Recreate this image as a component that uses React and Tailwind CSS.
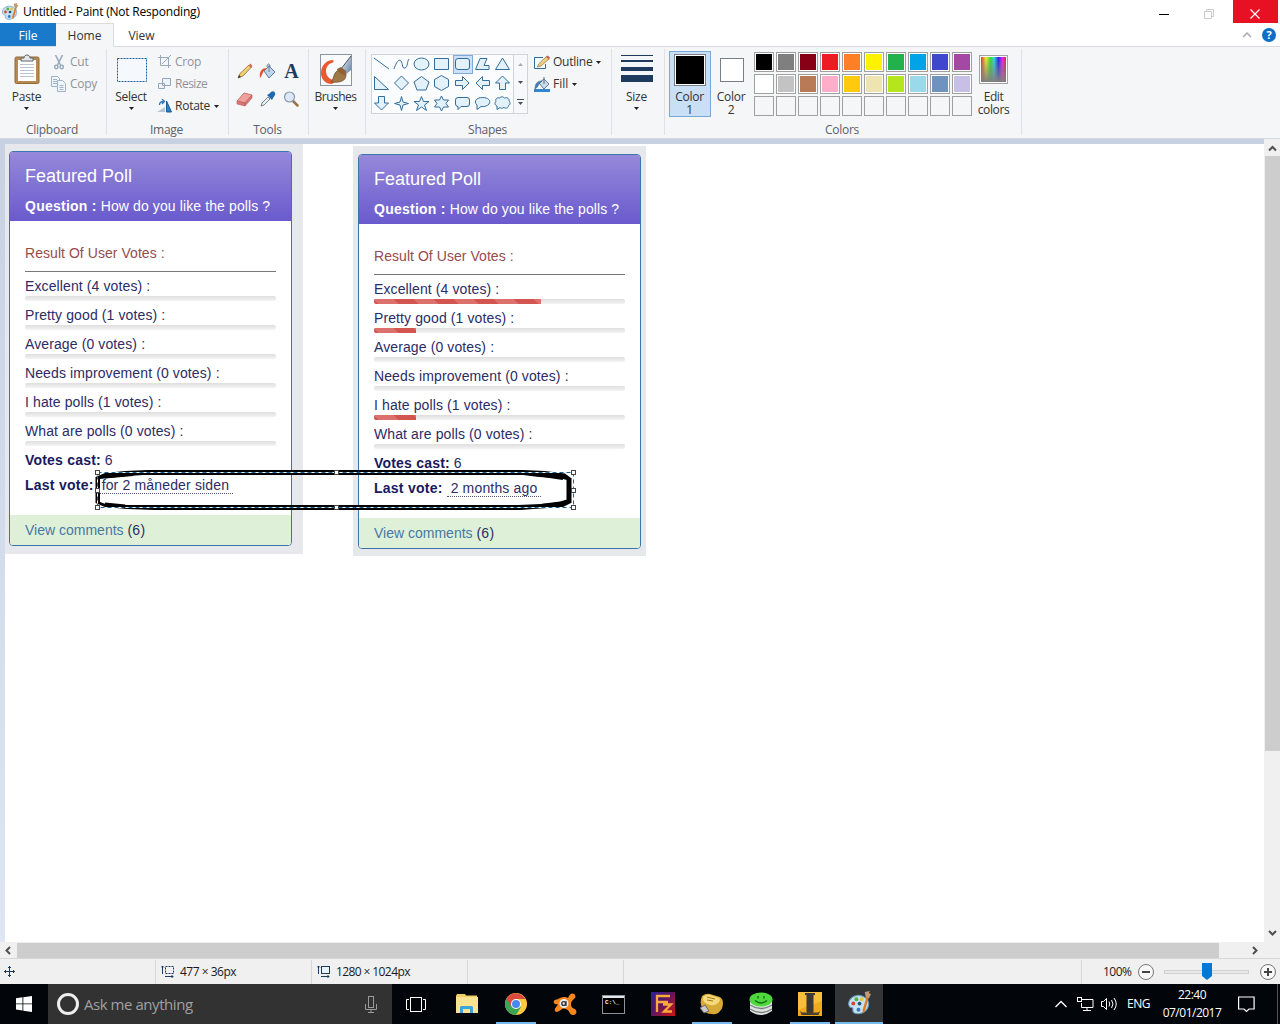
import React from 'react';

const ink = '#1f3a5f';

function Arrow({ className = '' }) {
  return (
    <svg className={className} width="5" height="3" viewBox="0 0 5 3">
      <path d="M0 0h5L2.500 3z" fill="#222" />
    </svg>
  );
}

function PaintIcon({ size = 18 }) {
  return (
    <svg width={size} height={size} viewBox="0 0 24 24">
      <path d="M2 10C4 5 10 3 15 5c5 2 7 6 5 11-2 5-9 7-13 5-3-2 0-4-2-5-3 0-4-3-3-6z" fill="#c4e2f2" stroke="#6c9dbd" />
      <circle cx="6" cy="12" r="1.900" fill="#d94436" />
      <circle cx="9" cy="8" r="1.900" fill="#58ad45" />
      <circle cx="14" cy="8" r="1.900" fill="#e9c43c" />
      <circle cx="12" cy="12" r="1.800" fill="#28507a" />
      <circle cx="11" cy="18" r="1.900" fill="#3b78c2" />
      <path d="M19 5l2 1-4 14-2 1v-3z" fill="#df7a25" />
      <path d="M17 1l5-1-1 2 2 1-2 4-3-1z" fill="#c29a70" />
    </svg>
  );
}

function Group({ label, width, children }) {
  return (
    <div className={`${width} flex h-[91px] shrink-0 flex-col`}>
      <div className="flex h-[74px]">{children}</div>
      <div className="h-[17px] pr-[2px] text-center leading-[17px] text-[#5c6066]">{label}</div>
    </div>
  );
}

function Divider() {
  return <div className="mt-[2px] h-[86px] w-px shrink-0 bg-[#dfe1e4]" />;
}

function BigButton({ icon, label, width }) {
  return (
    <div className={`${width} flex shrink-0 flex-col items-center pt-[7px]`}>
      <div className="flex h-[33px] items-start justify-center">{icon}</div>
      <div className="h-[19px] leading-[20px]">{label}</div>
      <Arrow className="mt-[1px]" />
    </div>
  );
}

function Row({ icon, label, muted, arrow }) {
  return (
    <div className={`flex h-[22px] items-center ${muted ? 'text-[#8f9399]' : 'text-[#333]'}`}>
      <div className="flex w-[20px] shrink-0 items-center">{icon}</div>
      <span>{label}</span>
      {arrow && <Arrow className="ml-[4px]" />}
    </div>
  );
}

const clipboardIcon = (
  <svg width="26" height="30" viewBox="0 0 26 30">
    <rect x="1" y="3" width="24" height="26.500" rx="1.500" fill="#b48a51" stroke="#8f6a38" />
    <rect x="4" y="6" width="18" height="21" fill="#fff" />
    <path d="M6 10.500h14M6 13.500h14M6 16.500h14M6 19.500h14M6 22.500h14" stroke="#b8c4d2" />
    <path d="M7 7V4h3c0-4 6-4 6 0h3v3z" fill="#e3e5e8" stroke="#5f6670" />
  </svg>
);
const cutIcon = (
  <svg className="ml-[4px]" width="10" height="15" viewBox="0 0 10 15">
    <path d="M1.500 0l5 10M8.500 0l-5 10" stroke="#9aabc0" strokeWidth="1.600" />
    <circle cx="2.300" cy="12" r="1.700" fill="none" stroke="#9aabc0" strokeWidth="1.500" />
    <circle cx="7.700" cy="12" r="1.700" fill="none" stroke="#9aabc0" strokeWidth="1.500" />
  </svg>
);
const copyIcon = (
  <svg className="ml-px" width="15" height="16" viewBox="0 0 15 16" fill="#f2f6fa" stroke="#9db1c8">
    <path d="M.5.5h6l2 2v8h-8z" />
    <path d="M2 3.500h4M2 5.500h4M2 7.500h4" />
    <path d="M6.500 4.500h5l3 3v8h-8z" />
    <path d="M8.500 9.500h4M8.500 11.500h4M8.500 13.500h4" />
  </svg>
);
const selectIcon = (
  <svg className="mt-[4px] ml-[1px]" width="30" height="24" viewBox="0 0 30 24">
    <rect x=".5" y=".5" width="29" height="23" fill="#f5f9fd" stroke="#1d5f9e" strokeDasharray="2 1" />
  </svg>
);
const cropIcon = (
  <svg width="14" height="14" viewBox="0 0 14 14" fill="none" stroke="#9aaabd">
    <path d="M2.500 0v10.500H13M0 2.500h10.500V13M13 0L4 9" />
  </svg>
);
const resizeIcon = (
  <svg width="13" height="12" viewBox="0 0 13 12" fill="#eef3f8" stroke="#92a5bb">
    <path d="M4.500.5h8v7h-8zM.5 5.500h6v5h-6z" />
  </svg>
);
const rotateIcon = (
  <svg width="16" height="14" viewBox="0 0 16 14">
    <path d="M9.500 2v11h5z" fill="#2d7fc0" stroke="#1c5b91" />
    <path d="M0 13l8-5v5z" fill="#b7c3cf" />
    <path d="M2.500 6c0-2 1-3.500 4-3.500M5 0l2.500 2.500L5 5" fill="none" stroke="#2a73b5" strokeWidth="1.300" />
  </svg>
);

const tools = [
  <svg key="pencil" width="16" height="16" viewBox="0 0 16 16">
    <path d="M1 15l2-4.500L12 2l2.500 2L6 13z" fill="#f2cf73" stroke="#8c7038" strokeWidth=".8" />
    <path d="M11.500 2.500l2.500 2.500 1.500-2L13.500.5z" fill="#d66a62" />
    <path d="M1 15l1-3 2 2z" fill="#333" />
  </svg>,
  <svg key="fill" width="17" height="17" viewBox="0 0 17 17">
    <path d="M5 8l5-5 6 6-6 6z" fill="#bdd5ea" stroke="#5d7fa3" />
    <path d="M10 9V2M8 4c0-4 3-4 3 0" stroke="#6b7f94" fill="none" />
    <path d="M1 15C0 8 3 5 8 5L5 8c-1.500 1-2 5-4 7z" fill="#e0532c" />
  </svg>,
  <div key="text" className="text-center font-['Liberation_Serif',serif] text-[20px] leading-[17px] font-bold text-[#1f3a5f]">A</div>,
  <svg key="eraser" width="17" height="15" viewBox="0 0 17 15">
    <path d="M1 9l7-8 8 2-7 8z" fill="#f1a09b" stroke="#b8605f" strokeWidth=".8" />
    <path d="M1 9v3l8 2v-3zM9 11v3l7-8V3z" fill="#da7672" stroke="#b8605f" strokeWidth=".6" />
  </svg>,
  <svg key="picker" width="16" height="16" viewBox="0 0 16 16">
    <path d="M1 15l1-3 6-6 2 2-6 6z" fill="#e8f0f7" stroke="#567" strokeWidth=".8" />
    <path d="M7 4l5 5 1-2 2-3c1-3-2-5-4-3L9 3z" fill="#2268ae" />
  </svg>,
  <svg key="zoom" width="16" height="16" viewBox="0 0 16 16">
    <path d="M10 10l4.500 4.500" stroke="#9c7048" strokeWidth="2.500" strokeLinecap="round" />
    <circle cx="6.500" cy="6" r="5" fill="#dbe9f6" stroke="#8a99aa" strokeWidth="1.200" />
  </svg>,
];

const brushIcon = (
  <svg width="32" height="32" viewBox="0 0 32 32">
    <defs>
      <linearGradient id="brushHandle" x1="0" y1="0" x2="1" y2="1"><stop stopColor="#f4f7fa" /><stop offset="1" stopColor="#5d7ba3" /></linearGradient>
    </defs>
    <rect x=".5" y=".5" width="31" height="31" fill="#f8fafb" stroke="#8b95a1" />
    <path d="M31 2v14l-6 5-4-5z" fill="url(#brushHandle)" />
    <path d="M31 2L21 15" stroke="#434d58" />
    <path d="M13 6C6 6 1 12 1 19c0 6 4 11 11 11l6-4c-7 1-12-3-12-9 0-4 3-8 6-8 2-1 2-2 1-3z" fill="#e85a30" />
    <path d="M11 28c3-3 2-8 6-11 4-3 9 0 9 4 0 6-6 8-15 7z" fill="#a07848" stroke="#6d4c27" strokeWidth=".7" />
    <path d="M17 15l4-2 5 4v4c-3 0-8-2-9-6z" fill="#8e6233" />
  </svg>
);

const shapes = [
  'M1 2l15 11',
  'M1 13C3 7 6 2 8 5s1 8 4 7 2-7 4-9',
  'M1 7.500a7.500 6 0 1 0 15 0a7.500 6 0 1-0-15 0z',
  'M1.500 2.500h14v11h-14z',
  'M4 2.500h9q2.500 0 2.500 2.500v6q0 2.500-2.500 2.500H4q-2.500 0-2.500-2.500V5Q1.500 2.500 4 2.500z',
  'M1.500 13.500l4.500-11h7l-3 7h5v4z',
  'M8.500 2l7 11.500h-14z',
  'M1.500 1.500v13h14z',
  'M8.500 1l7 7-7 7-7-7z',
  'M8.500 1.500l7.500 5.500-3 8h-9l-3-8z',
  'M8.500.5l7 4v7l-7 4-7-4v-7z',
  'M1.500 5.500h7v-4l6.500 6.500-6.500 6.500v-4h-7z',
  'M15.500 5.500h-7v-4L2 8l6.500 6.500v-4h7z',
  'M8.500 1l7 7h-4v6.500h-6V8h-4z',
  'M5.500 1.500h6V8h4l-7 7-7-7h4z',
  'M8.500 1.500l1.500 5.500 5.500 1.500-5.500 1.500-1.500 5.500-1.500-5.500-5.500-1.500 5.500-1.500z',
  'M8.500 1.500l2 5h5.500l-4.500 3.500 2 5.500-5-3.500-5 3.500 2-5.500L1 6.500h5.500z',
  'M8.500 1l2 4h5l-2.500 3.500 2.500 3.500h-5l-2 4-2-4h-5L4 8.500 1.500 5h5z',
  'M4 2.500h9q2.500 0 2.500 2.500v4q0 2.500-2.500 2.500H7l-3 3v-3q-2.500 0-2.500-2.500V5Q1.500 2.500 4 2.500z',
  'M3 10C-1 6 3 2.500 8.500 2.500s9 3 6.500 6.500c-1.500 2-5 3-8 2.500L3 14.500z',
  'M3 11C0 10 1 7 2 6.500 1 4 3 2 5.500 3c2-2 4-1 5 0 3-1 5 1 4.500 3 2 2 1 4-.5 4.500 0 3-3 3-4.500 2-2 1-3 1-4 0l-3 2z',
];

function ShapeGallery() {
  return (
    <div className="mt-[7px] ml-[5px] flex h-[60px] w-[157px] shrink-0 border border-[#d0d3d8] bg-[#fbfcfe]">
      <div className="grid w-[141px] grid-cols-7 grid-rows-3">
        {shapes.map((d, i) => (
          <div
            key={i}
            className={`flex items-center justify-center ${i === 4 ? 'bg-[#cce1f7] outline outline-[#7cabdb] -outline-offset-1' : ''}`}
          >
            <svg className="-ml-px" width="17" height="17" viewBox="0 0 17 17">
              {i === 2 ? (
                <ellipse cx="8.500" cy="8" rx="7.500" ry="6" fill="#e3f1fa" stroke="#326d9b" />
              ) : (
                <path d={d} fill={i < 2 ? 'none' : '#e3f1fa'} stroke="#326d9b" />
              )}
            </svg>
          </div>
        ))}
      </div>
      <div className="flex w-[14px] flex-col items-center justify-around border-l border-[#d0d3d8] bg-[#f7f8fa] pr-px">
        <svg width="5" height="3"><path d="M0 3h5L2.500 0z" fill="#a9adb3" /></svg>
        <svg width="5" height="3"><path d="M0 0h5L2.500 3z" fill="#444e5c" /></svg>
        <svg width="7" height="6"><path d="M0 .5h7" stroke="#444e5c" /><path d="M1 3h5L3.500 6z" fill="#444e5c" /></svg>
      </div>
    </div>
  );
}

const outlineIcon = (
  <svg width="16" height="15" viewBox="0 0 16 15">
    <path d="M9 2.500H.5v11h11V9" fill="#f4fafe" stroke="#326b99" />
    <path d="M3.500 12l1-3 8-7.500L15 4l-8 7z" fill="#ecd080" stroke="#8c7038" strokeWidth=".7" />
    <path d="M12 2l3 2.500 1-2L13.500.5z" fill="#c75b55" />
  </svg>
);
const fillIcon = (
  <svg width="16" height="16" viewBox="0 0 16 16">
    <path d="M0 13h16v3H0z" fill="#3385cf" />
    <path d="M5 7l5-4 5 5-5 5z" fill="#cbdceb" stroke="#5f7d99" />
    <path d="M10 8V1" stroke="#4d728f" />
    <path d="M1 13C1 7 4 5 8 5L5 8c-1 2-2 4-4 5z" fill="#447fb4" stroke="#4d728f" strokeWidth=".7" />
  </svg>
);

const palette = [
  '#000000', '#7f7f7f', '#880015', '#ed1c24', '#ff7f27', '#fff200', '#22b14c', '#00a2e8', '#3f48cc', '#a349a4',
  '#ffffff', '#c3c3c3', '#b97a57', '#ffaec9', '#ffc90e', '#efe4b0', '#b5e61d', '#99d9ea', '#7092be', '#c8bfe7',
  null, null, null, null, null, null, null, null, null, null,
];

function Ribbon() {
  return (
    <div className="flex h-[92px] border-b border-[#d5d8dc] bg-[#f5f6f7] tracking-[-0.25px] text-[#333]">
      <Group label="Clipboard" width="w-[106px]">
        <BigButton icon={clipboardIcon} label="Paste" width="w-[53px]" />
        <div className="-ml-[3px] pt-[4px]">
          <Row icon={cutIcon} label="Cut" muted />
          <Row icon={copyIcon} label="Copy" muted />
        </div>
      </Group>
      <Divider />
      <Group label="Image" width="w-[121px]">
        <BigButton icon={selectIcon} label="Select" width="w-[48px]" />
        <div className="pt-[4px]">
          <Row icon={<div className="pl-[3px]">{cropIcon}</div>} label="Crop" muted />
          <Row icon={<div className="pl-[3px]">{resizeIcon}</div>} label={<span className="tracking-[-0.5px]">Resize</span>} muted />
          <Row icon={<div className="pl-[2px]">{rotateIcon}</div>} label="Rotate" arrow />
        </div>
      </Group>
      <Divider />
      <Group label="Tools" width="w-[79px]">
        <div className="mt-[10px] ml-[4px] grid h-[56px] w-[70px] grid-cols-3 grid-rows-2 place-items-center">{tools}</div>
      </Group>
      <Divider />
      <Group label="" width="w-[56px]">
        <BigButton icon={brushIcon} label={<span className="tracking-[-0.5px]">Brushes</span>} width="w-[53px]" />
      </Group>
      <Divider />
      <Group label="Shapes" width="w-[245px]">
        <ShapeGallery />
        <div className="ml-[6px] pt-[4px]">
          <Row icon={outlineIcon} label={<span className="-ml-px">Outline</span>} arrow />
          <Row icon={fillIcon} label={<span className="-ml-px tracking-normal">Fill</span>} arrow />
        </div>
      </Group>
      <Divider />
      <Group label="" width="w-[52px]">
        <BigButton
          label="Size"
          width="w-[49px]"
          icon={
            <div className="mt-px flex w-[32px] flex-col">
              <div className="h-px bg-[#1f3a5f]" />
              <div className="mt-[4px] h-[2px] bg-[#1f3a5f]" />
              <div className="mt-[5px] h-[4px] bg-[#1f3a5f]" />
              <div className="mt-[4px] h-[7px] bg-[#1f3a5f]" />
            </div>
          }
        />
      </Group>
      <Divider />
      <Group label="Colors" width="w-[356px]">
        <div className="mt-[4px] ml-[4px] flex h-[66px] w-[42px] shrink-0 flex-col items-center border border-[#79a7d8] bg-[#c9dff5] pt-[2px] text-center leading-[13px]">
          <div className="mb-[4px] h-[32px] w-[32px] border border-[#7a7f85] bg-white p-px">
            <div className="h-full bg-black" />
          </div>
          <span className="-ml-px">Color<br />1</span>
        </div>
        <div className="mt-[11px] ml-[1px] flex w-[39px] shrink-0 flex-col items-center text-center leading-[13px]">
          <div className="mb-[8px] h-[24px] w-[24px] border border-[#7a7f85] bg-white" />
          <span className="-ml-px">Color<br />2</span>
        </div>
        <div className="mt-[5px] ml-[3px] grid h-[64px] w-[218px] shrink-0 grid-cols-10 gap-[2px]">
          {palette.map((c, i) => (
            <div key={i} className={`h-[20px] w-[20px] border border-[#a0a0a0] p-px ${c ? 'bg-white' : 'bg-[#f5f6f7]'}`}>
              {c && <div className="h-full" style={{ backgroundColor: c }} />}
            </div>
          ))}
        </div>
        <div className="mt-[8px] ml-[2px] flex w-[39px] shrink-0 flex-col items-center text-center leading-[13px]">
          <div className="mb-[6px] h-[29px] w-[29px] border border-[#a3a3a3] bg-white p-px">
            <div className="h-full bg-[linear-gradient(to_top,#808080,transparent),linear-gradient(to_right,#d33,#ee3_20%,#3d3_38%,#3dd_52%,#22e_70%,#e2e_85%,#e22)]" />
          </div>
          <span className="tracking-[-0.4px]">Edit<br />colors</span>
        </div>
      </Group>
      <Divider />
    </div>
  );
}

const options = [
  ['Excellent', 4],
  ['Pretty good', 1],
  ['Average', 0],
  ['Needs improvement', 0],
  ['I hate polls', 1],
  ['What are polls', 0],
];

function PollCard({ showBars, last }) {
  return (
    <div className="h-[395px] w-[283px] overflow-hidden rounded-[4px] border border-[#3a75ab] bg-white font-['Liberation_Sans',Arial,sans-serif] text-[14px] leading-[20px] text-[#2c2c66]">
      <div className="h-[69px] bg-linear-to-b from-[#9688da] to-[#6a5acd] px-[15px] pt-[14px] text-white">
        <div className="text-[18px] leading-[20px]">Featured Poll</div>
        <div className="mt-[10px] tracking-[0.11px] whitespace-nowrap"><b className="tracking-[0.25px]">Question :</b> How do you like the polls ?</div>
      </div>
      <div className="h-[294px] px-[15px] pt-[22px] tracking-[0.11px]">
        <div className="tracking-[0.05px] text-[#964c4c]">Result Of User Votes :</div>
        <div className="mt-[8px] mb-[4px] h-px bg-[#77777d]" />
        {options.map(([name, votes]) => (
          <div key={name} className="mb-[4px]">
            <div>{name} ({votes} votes) :</div>
            <div className="h-[5px] overflow-hidden rounded-[2px] bg-linear-to-b from-[#dedede] to-[#f4f4f4]">
              {showBars && votes > 0 && (
                <div
                  className="h-full bg-[#d3554f] bg-[linear-gradient(45deg,#dc706c_25%,transparent_25%,transparent_50%,#dc706c_50%,#dc706c_75%,transparent_75%)] bg-size-[40px_40px]"
                  style={{ width: `${(votes / 6) * 100}%` }}
                />
              )}
            </div>
          </div>
        ))}
        <div><b className="tracking-[0.2px] text-[#191960]">Votes cast:</b> 6</div>
        <div className="mt-[5px] flex">
          <b className="tracking-[0.25px] text-[#191960]">Last vote:</b>
          <span className="ml-[4px] h-[19px] border-b border-dotted border-[#555580] px-[4px] leading-[20px] tracking-[0.16px]">{last}</span>
        </div>
      </div>
      <div className="h-[30px] bg-[#dff0d8] px-[15px] leading-[30px]">
        <span className="text-[#4678a5]">View comments</span> <span className="tracking-[0.25px]">(6)</span>
      </div>
    </div>
  );
}

const handles = [[0, 0], [239, 0], [476, 0], [0, 18], [476, 18], [0, 35], [239, 35], [476, 35]];

function Selection() {
  return (
    <svg className="absolute top-[324px] left-[88px]" width="486" height="46" viewBox="0 0 486 46">
      <g fillRule="evenodd">
        <path d="M55 2H430L452 3 472 5.500 478 10V35L470 39 440 41 428 42H62L34 41 12 39 2.500 35V9L12 5 32 3zM50 7L28 8.500 7 11V34L14 36.500 34 37H425L448 36 467 33.500 474 31.500V12L466 10 446 9 430 7z" fill="#000" transform="translate(0 0)" />
      </g>
      <g fill="none">
        <rect x="4.500" y="4.500" width="476" height="35" stroke="#fff" />
        <rect x="4.500" y="4.500" width="476" height="35" stroke="#1c6299" strokeDasharray="4 3" />
        <path d="M12 9L40 6.500M12 36L32 38M450 7.500l20 3M448 37.500l22-2" stroke="#000" strokeWidth="3" />
        <path d="M476 10v25" stroke="#000" strokeWidth="5" />
      </g>
      {handles.map(([x, y]) => (
        <rect key={`${x}-${y}`} x={x + 2.5} y={y + 2.5} width="4" height="4" fill="#fff" stroke="#444" />
      ))}
    </svg>
  );
}

function Chevron({ d, color = '#505050' }) {
  return (
    <svg width="9" height="9" viewBox="0 0 9 9">
      <path d={d} fill="none" stroke={color} strokeWidth="2" />
    </svg>
  );
}

function Workspace() {
  return (
    <div className="flex h-[803px] bg-[#c8d1e2]">
      <div className="w-[5px] shrink-0 bg-linear-to-b from-[#c8d1e2] to-[#dde6f2]" />
      <div className="relative mt-[5px] w-[1259px] overflow-hidden bg-white">
        <div className="absolute top-0 left-0 h-[410px] w-[298px] bg-[#e7e8ec] pt-[7px] pl-[4px]">
          <PollCard last="for 2 måneder siden" />
        </div>
        <div className="absolute top-[2px] left-[348px] h-[410px] w-[293px] bg-[#e7e8ec] pt-[8px] pl-[5px]">
          <PollCard showBars last="2 months ago" />
        </div>
        <Selection />
      </div>
      <div className="flex w-[16px] flex-col items-center bg-[#f0f0f0]">
        <div className="flex h-[17px] items-center pt-px"><Chevron d="M1 6.500L4.500 3 8 6.500" /></div>
        <div className="h-[595px] w-[15px] bg-[#cdcdcd]" />
        <div className="mt-auto flex h-[20px] items-center"><Chevron d="M1 3l3.500 3.500L8 3" /></div>
      </div>
    </div>
  );
}

function StatusBar() {
  return (
    <div className="flex h-[26px] items-center border-t border-[#d7d7d7] bg-[#f0f0f0] text-[#1a1a1a]">
      <div className="flex h-[24px] w-[156px] items-center border-r border-[#d7d7d7] pl-[4px]">
        <svg width="11" height="11" viewBox="0 0 11 11" fill="none" stroke={ink}>
          <path d="M5.500 0v11M0 5.500h11M4 2l1.500-1.500L7 2M4 9l1.500 1.500L7 9M2 4L.5 5.500 2 7M9 4l1.500 1.500L9 7" />
        </svg>
      </div>
      <div className="flex h-[24px] w-[156px] items-center border-r border-[#d7d7d7] pl-[5px]">
        <svg width="14" height="13" viewBox="0 0 14 13" fill="none" stroke={ink}>
          <path d="M1.500 1v8M0 2.500L1.500 1 3 2.500M4 11.500h8M10.500 10l1.500 1.500-1.500 1.500" />
          <rect x="4.500" y="1.500" width="8" height="7" strokeDasharray="2 1" />
        </svg>
        <span className="ml-[5px] tracking-[-0.5px]">477 × 36px</span>
      </div>
      <div className="flex h-[24px] w-[156px] items-center border-r border-[#d7d7d7] pl-[5px]">
        <svg width="14" height="13" viewBox="0 0 14 13" fill="none" stroke={ink}>
          <path d="M1.500 1v8M0 2.500L1.500 1 3 2.500M4 11.500h8M10.500 10l1.500 1.500-1.500 1.500" />
          <rect x="4.500" y="1.500" width="8" height="7" fill="#e8f3fb" />
        </svg>
        <span className="ml-[5px] tracking-[-0.6px]">1280 × 1024px</span>
      </div>
      <div className="h-[24px] w-[156px] border-r border-[#d7d7d7]" />
      <div className="h-[24px] w-[458px] border-r border-[#d7d7d7]" />
      <div className="flex h-[24px] flex-1 items-center">
        <span className="ml-[21px] w-[34px] tracking-[-0.5px]">100%</span>
        <svg width="18" height="18" viewBox="0 0 18 18"><circle cx="9" cy="9" r="7.500" fill="#f7f7f7" stroke="#777" /><path d="M5 9h8" stroke="#444" strokeWidth="2" /></svg>
        <div className="relative ml-[9px] h-[4px] w-[85px] border border-[#d0d0d0] bg-[#e8eaea]">
          <svg className="absolute -top-[8px] left-[37px]" width="10" height="17"><path d="M0 0h10v13l-5 4-5-4z" fill="#0078d7" /></svg>
        </div>
        <svg className="ml-[10px]" width="18" height="18" viewBox="0 0 18 18"><circle cx="9" cy="9" r="7.500" fill="#f7f7f7" stroke="#777" /><path d="M5 9h8M9 5v8" stroke="#444" strokeWidth="2" /></svg>
      </div>
    </div>
  );
}

const apps = [
  { name: 'explorer', icon: (
    <svg width="22" height="20" viewBox="0 0 22 20"><path d="M0 2l1-2h8l1 1.500h11V19H0z" fill="#f0cf63" /><path d="M0 3h22v16H0z" fill="#fbe391" /><path d="M4 19v-6l1-1h11l1 1v6h-3v-4H7v4z" fill="#3da6d9" /></svg>
  ) },
  { name: 'chrome', open: true, icon: (
    <svg width="22" height="22" viewBox="0 0 22 22">
      <circle cx="11" cy="11" r="11" fill="#fcca3f" />
      <path d="M11 11L1.500 5.500A11 11 0 0 0 11 22l5-8z" fill="#3ba457" />
      <path d="M11 11l-5 2-4.500-7.500A11 11 0 0 1 20.500 6H11z" fill="#dc4b3e" />
      <circle cx="11" cy="11" r="5" fill="#fff" /><circle cx="11" cy="11" r="4" fill="#4688f1" />
    </svg>
  ) },
  { name: 'avast', icon: (
    <svg width="24" height="24" viewBox="0 0 24 24">
      <path d="M7 6q5-2 8 0 2-5 5-4.500 3.500 1 2 4.500c-2 2-4 3-4 6s1 4 4 5q3 3 0 5.500c-3 1.500-5 0-6-3q-2-3-6-3-3 2-6 3.500-3 0-2-3.500l3-4q-4 0-4.500-2.500Q1 7 4 7.500z" fill="#f7861c" />
      <circle cx="11" cy="11.500" r="4.500" fill="#e9edf2" /><circle cx="10.700" cy="11.500" r="1.900" fill="none" stroke="#333" strokeWidth="1.400" /><path d="M13 9v5" stroke="#333" strokeWidth="1.200" />
    </svg>
  ) },
  { name: 'terminal', icon: (
    <div className="flex h-[19px] w-[23px] flex-col border border-[#8c9298] bg-black">
      <div className="h-[2px] shrink-0 bg-[#e4e7ea]" />
      <div className="pl-[2px] font-['Liberation_Mono',monospace] text-[6px] leading-[9px] font-bold text-white">C:\_</div>
    </div>
  ) },
  { name: 'filezilla', icon: (
    <svg width="24" height="24" viewBox="0 0 24 24">
      <defs><linearGradient id="fz" x1="0" y1="0" x2="1" y2="1"><stop stopColor="#2a2199" /><stop offset=".45" stopColor="#5d1560" /><stop offset="1" stopColor="#d01414" /></linearGradient></defs>
      <path d="M0 0h24v24H0z" fill="url(#fz)" />
      <path d="M6 20V4h13M6 10h11M12 12.500h8l-7 7h8" stroke="#f9a93a" strokeWidth="2.300" fill="none" />
    </svg>
  ) },
  { name: 'connector', open: true, icon: (
    <svg width="25" height="22" viewBox="0 0 25 22">
      <path d="M3 3q4-3 8-2l10 3q3 2 3 6 0 5-3 8-3 4-8 3-6 0-9-4Q0 10 3 3z" fill="#d7aa35" />
      <path d="M4 4q3-3 7-2l9 3q2 2-1 5-3 3-8 2Q3 10 4 4z" fill="#f5da7b" />
      <path d="M8 4l8 2M8 7l6 1" stroke="#a57a21" strokeWidth="1.200" />
      <path d="M1 15l5-3 4 6-5 2z" fill="#c8cacb" stroke="#666" />
    </svg>
  ) },
  { name: 'database', icon: (
    <svg width="24" height="24" viewBox="0 0 24 24">
      <path d="M1 8v11q11 8 22 0V8z" fill="#dfe4e2" />
      <path d="M1 13q11 7 22 0M1 17q11 7 22 0" fill="none" stroke="#7a827f" strokeWidth="1.300" />
      <ellipse cx="12" cy="7.500" rx="11.500" ry="7" fill="#4fd83d" />
      <path d="M6 8.500q6 5 12 0M9 4v2.500M15 4v2.500" fill="none" stroke="#126613" strokeWidth="1.300" />
    </svg>
  ) },
  { name: 'tower', open: true, icon: (
    <svg width="24" height="24" viewBox="0 0 24 24"><path d="M0 0h24v24H0z" fill="#f3a91c" /><path d="M0 18L24 9V0H0z" fill="#f8bd3a" /><path d="M7 1h10v2h-1.500v17h-7V3H7z" fill="#3a3938" /><path d="M2 19l2 1.500h5v-1h6v1h5l2-1.500-1.500 4h-17z" fill="#4a4030" /></svg>
  ) },
];

function Taskbar() {
  return (
    <div className="flex h-[40px] bg-[#020509] text-white">
      <div className="flex w-[48px] items-center justify-center">
        <svg width="16" height="16" viewBox="0 0 16 16" fill="#fff"><path d="M0 2.200l6.500-.9v6.200H0zM7.300 1.200L16 0v7.500H7.300zM0 8.300h6.500v6.200L0 13.600zM7.300 8.300H16V16l-8.700-1.200z" /></svg>
      </div>
      <div className="flex w-[344px] items-center bg-[#323232] pl-[9px]">
        <div className="h-[22px] w-[22px] rounded-full border-[3px] border-[#eee]" />
        <span className="ml-[5px] text-[15px] tracking-[-0.45px] text-[#a0a0a0]">Ask me anything</span>
        <svg className="mr-[15px] ml-auto" width="12" height="17" viewBox="0 0 12 17" fill="none" stroke="#9a9a9a"><rect x="3.500" y=".5" width="5" height="11" /><path d="M.5 8v5.500h11V8M6 14v3M3 16.500h6" /></svg>
      </div>
      <div className="flex w-[50px] items-center justify-center pr-[2px]">
        <svg width="20" height="15" viewBox="0 0 20 15" fill="none" stroke="#fff"><rect x="4.500" y=".5" width="11" height="14" /><path d="M3 2.500H.5v10H3M17 2.500h2.500v10H17" /></svg>
      </div>
      {apps.map((a) => (
        <div key={a.name} className="flex w-[49px] flex-col items-center pt-[7px]">
          <div className="flex h-[26px] items-center">{a.icon}</div>
          {a.open && <div className="mt-auto h-[2px] w-[40px] bg-[#76b9ed]" />}
        </div>
      ))}
      <div className="ml-[1px] flex w-[48px] flex-col items-center bg-[#333537] pt-[7px]">
        <PaintIcon size={25} />
        <div className="mt-auto h-[2px] w-full bg-[#76b9ed]" />
      </div>
      <div className="ml-auto flex items-center pr-[2px]">
        <svg width="12" height="8" viewBox="0 0 12 8" fill="none" stroke="#fff" strokeWidth="1.300"><path d="M.5 7L6 1.500 11.500 7" /></svg>
        <svg className="ml-[10px]" width="17" height="14" viewBox="0 0 17 14" fill="none" stroke="#fff"><path d="M5 2.500h11v8H4.500V6M10 11v2.500M6 13.500h8" /><rect x=".5" y=".5" width="4" height="4" /></svg>
        <svg className="ml-[7px]" width="17" height="14" viewBox="0 0 17 14" fill="none" stroke="#fff"><path d="M.5 4.500h2l3-3v11l-3-3h-2zM8 4.500q1.500 2.500 0 5M10.500 3q3 4 0 8M13 1q4.500 6 0 12" /></svg>
        <span className="ml-[9px] w-[26px] tracking-[-0.5px]">ENG</span>
        <div className="ml-[7px] w-[64px] text-center leading-[18px] tracking-[-0.5px]">22:40<br />07/01/2017</div>
        <svg className="mr-[22px] ml-[14px]" width="17" height="17" viewBox="0 0 17 17" fill="none" stroke="#fff" strokeWidth="1.200"><path d="M.6 1h15.500v12H11l-2.500 2.500L6 13H.6z" /></svg>
        <div className="h-[40px] w-px bg-[#555]" />
      </div>
    </div>
  );
}

export default function App() {
  return (
    <div className="h-[1024px] w-[1280px] overflow-hidden bg-white font-['Open_Sans','Noto_Sans',sans-serif] text-[12px] whitespace-nowrap">
      <div className="flex h-[23px] items-start">
        <div className="pt-[3px] pl-[1px]"><PaintIcon /></div>
        <div className="ml-[4px] leading-[24px] tracking-[-0.2px]">Untitled - Paint (Not Responding)</div>
        <svg className="mt-[8px] ml-auto" width="56" height="12" viewBox="0 0 56 12" fill="none">
          <path d="M0 6.500h10" stroke="#000" /><path d="M45.500 3.500h7v7h-7zM47.500 3.500v-2h7v7h-2" stroke="#c9c9c9" />
        </svg>
        <div className="mr-[2px] ml-[18px] flex h-[23px] w-[45px] items-center justify-center bg-[#e81123] pt-[4px] pr-px">
          <svg width="10" height="10" viewBox="0 0 10 10"><path d="M.5.5l9 9M9.500.5l-9 9" stroke="#fff" strokeWidth="1.200" /></svg>
        </div>
      </div>
      <div className="flex h-[24px] border-b border-[#d9dbde] text-center leading-[25px] text-[#333]">
        <div className="h-[23px] w-[56px] bg-[#1979ca] text-white">File</div>
        <div className="-mb-px h-[24px] w-[58px] border-t border-r border-[#d9dbde] bg-[#f5f6f7] leading-[23px]">Home</div>
        <div className="w-[55px]">View</div>
        <div className="ml-auto flex items-center pr-[4px]">
          <svg width="10" height="6" viewBox="0 0 10 6"><path d="M1 5l4-4 4 4" fill="none" stroke="#a5a5a5" strokeWidth="1.400" /></svg>
          <div className="ml-[10px] h-[14px] w-[14px] rounded-full bg-[#0d6fc5] text-[11px] leading-[14px] font-bold text-white">?</div>
        </div>
      </div>
      <Ribbon />
      <Workspace />
      <div className="flex h-[16px] items-center bg-[#f0f0f0]">
        <div className="flex w-[17px] justify-center"><Chevron d="M6 1L2.500 4.500 6 8" /></div>
        <div className="h-[15px] w-[1202px] bg-[#cdcdcd]" />
        <div className="ml-[31px]"><Chevron d="M3 1l3.500 3.500L3 8" /></div>
      </div>
      <StatusBar />
      <Taskbar />
    </div>
  );
}
